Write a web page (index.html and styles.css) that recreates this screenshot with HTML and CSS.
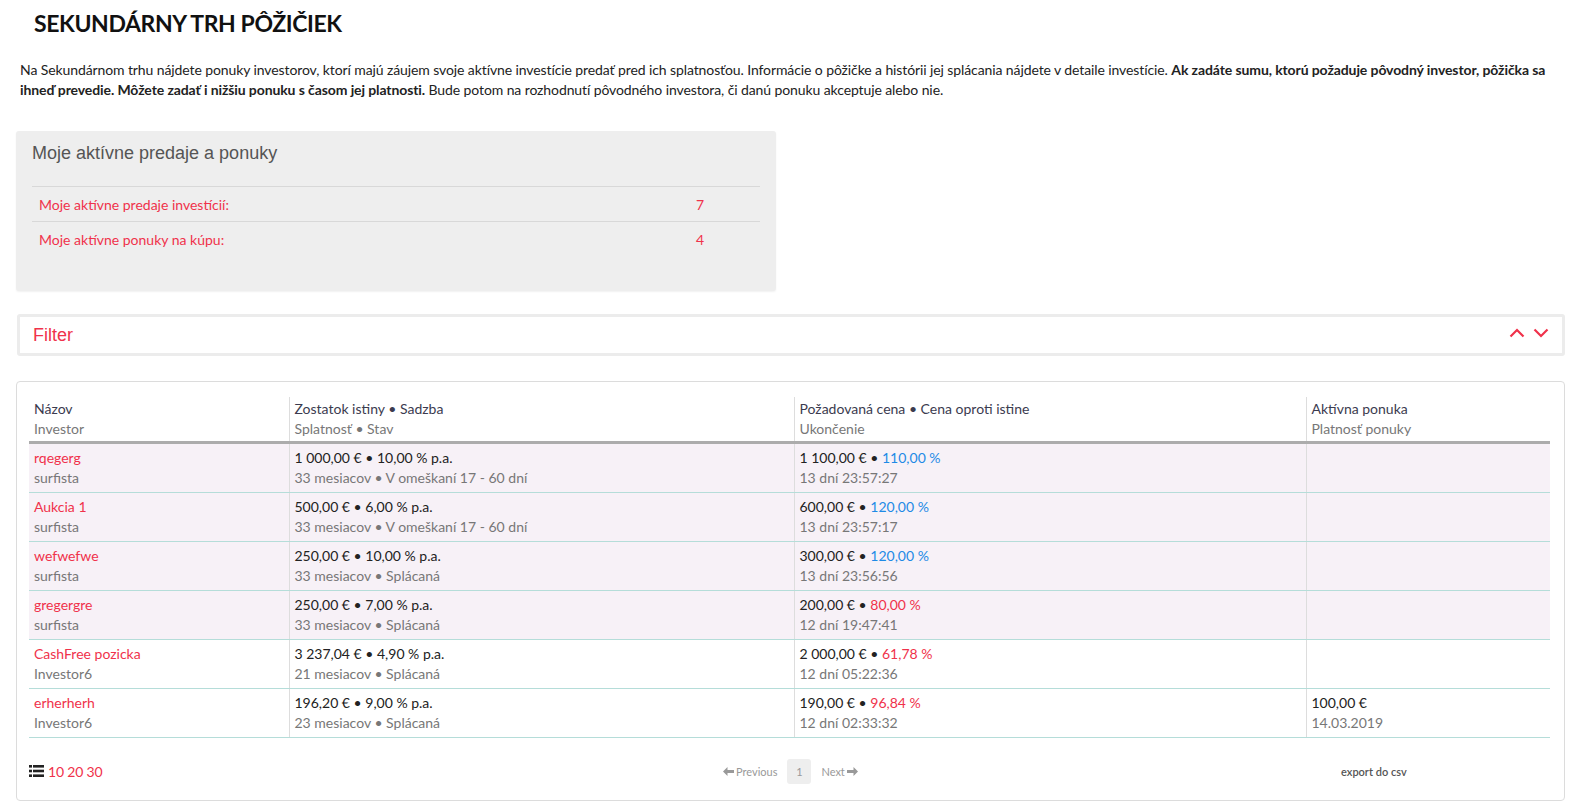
FILE: index.html
```html
<!DOCTYPE html>
<html lang="sk">
<head>
<meta charset="utf-8">
<title>Sekundárny trh pôžičiek</title>
<link rel="stylesheet" href="styles.css">
</head>
<body>
<div class="page">
  <h1 class="title">SEKUNDÁRNY TRH PÔŽIČIEK</h1>
  <p class="intro">Na Sekundárnom trhu nájdete ponuky investorov, ktorí majú záujem svoje aktívne investície predať pred ich splatnosťou. Informácie o pôžičke a histórii jej splácania nájdete v detaile investície. <b>Ak zadáte sumu, ktorú požaduje pôvodný investor, pôžička sa ihneď prevedie. Môžete zadať i nižšiu ponuku s časom jej platnosti.</b> Bude potom na rozhodnutí pôvodného investora, či danú ponuku akceptuje alebo nie.</p>

  <div class="summary">
    <h2 class="summary-title">Moje aktívne predaje a ponuky</h2>
    <table class="summary-table">
      <tr><td class="s-label">Moje aktívne predaje investícií:</td><td class="s-val">7</td></tr>
      <tr><td class="s-label">Moje aktívne ponuky na kúpu:</td><td class="s-val">4</td></tr>
    </table>
  </div>

  <div class="filter">
    <span class="filter-title">Filter</span>
    <span class="chevrons">
      <svg width="16" height="10" viewBox="0 0 16 10"><path d="M1.5 8.5 L8 2 L14.5 8.5" fill="none" stroke="#f0324b" stroke-width="2.2"/></svg>
      <svg width="16" height="10" viewBox="0 0 16 10"><path d="M1.5 1.5 L8 8 L14.5 1.5" fill="none" stroke="#f0324b" stroke-width="2.2"/></svg>
    </span>
  </div>

  <div class="card">
    <table class="grid">
      <colgroup><col class="c1"><col class="c2"><col class="c3"><col class="c4"></colgroup>
      <thead>
        <tr>
          <th><div class="h1">Názov</div><div class="h2">Investor</div></th>
          <th><div class="h1">Zostatok istiny • Sadzba</div><div class="h2">Splatnosť • Stav</div></th>
          <th><div class="h1">Požadovaná cena • Cena oproti istine</div><div class="h2">Ukončenie</div></th>
          <th><div class="h1">Aktívna ponuka</div><div class="h2">Platnosť ponuky</div></th>
        </tr>
      </thead>
      <tbody>
        <tr class="hl">
          <td><div class="l1 red">rqegerg</div><div class="l2">surfista</div></td>
          <td><div class="l1">1 000,00 € • 10,00 % p.a.</div><div class="l2">33 mesiacov • V omeškaní 17 - 60 dní</div></td>
          <td><div class="l1">1 100,00 € • <span class="blue">110,00 %</span></div><div class="l2">13 dní 23:57:27</div></td>
          <td></td>
        </tr>
        <tr class="hl">
          <td><div class="l1 red">Aukcia 1</div><div class="l2">surfista</div></td>
          <td><div class="l1">500,00 € • 6,00 % p.a.</div><div class="l2">33 mesiacov • V omeškaní 17 - 60 dní</div></td>
          <td><div class="l1">600,00 € • <span class="blue">120,00 %</span></div><div class="l2">13 dní 23:57:17</div></td>
          <td></td>
        </tr>
        <tr class="hl">
          <td><div class="l1 red">wefwefwe</div><div class="l2">surfista</div></td>
          <td><div class="l1">250,00 € • 10,00 % p.a.</div><div class="l2">33 mesiacov • Splácaná</div></td>
          <td><div class="l1">300,00 € • <span class="blue">120,00 %</span></div><div class="l2">13 dní 23:56:56</div></td>
          <td></td>
        </tr>
        <tr class="hl">
          <td><div class="l1 red">gregergre</div><div class="l2">surfista</div></td>
          <td><div class="l1">250,00 € • 7,00 % p.a.</div><div class="l2">33 mesiacov • Splácaná</div></td>
          <td><div class="l1">200,00 € • <span class="red">80,00 %</span></div><div class="l2">12 dní 19:47:41</div></td>
          <td></td>
        </tr>
        <tr>
          <td><div class="l1 red">CashFree pozicka</div><div class="l2">Investor6</div></td>
          <td><div class="l1">3 237,04 € • 4,90 % p.a.</div><div class="l2">21 mesiacov • Splácaná</div></td>
          <td><div class="l1">2 000,00 € • <span class="red">61,78 %</span></div><div class="l2">12 dní 05:22:36</div></td>
          <td></td>
        </tr>
        <tr>
          <td><div class="l1 red">erherherh</div><div class="l2">Investor6</div></td>
          <td><div class="l1">196,20 € • 9,00 % p.a.</div><div class="l2">23 mesiacov • Splácaná</div></td>
          <td><div class="l1">190,00 € • <span class="red">96,84 %</span></div><div class="l2">12 dní 02:33:32</div></td>
          <td><div class="l1">100,00 €</div><div class="l2">14.03.2019</div></td>
        </tr>
      </tbody>
    </table>

    <div class="footer">
      <div class="sizes">
        <svg class="list-ico" width="15" height="12" viewBox="0 0 15 12"><rect x="0" y="0" width="3" height="2.6" fill="#222"/><rect x="0" y="4.7" width="3" height="2.6" fill="#222"/><rect x="0" y="9.4" width="3" height="2.6" fill="#222"/><rect x="4" y="0" width="11" height="2.6" fill="#222"/><rect x="4" y="4.7" width="11" height="2.6" fill="#222"/><rect x="4" y="9.4" width="11" height="2.6" fill="#222"/></svg>
        <span class="red">10</span> <span class="red">20</span> <span class="red">30</span>
      </div>
      <div class="pager">
        <span class="pg-link"><svg width="11" height="9" viewBox="0 0 11 9"><path d="M0 4.5 L4.5 0 L4.5 3 L11 3 L11 6 L4.5 6 L4.5 9 Z" fill="#999"/></svg>Previous</span>
        <span class="pg-num">1</span>
        <span class="pg-link">Next<svg width="11" height="9" viewBox="0 0 11 9"><path d="M11 4.5 L6.5 0 L6.5 3 L0 3 L0 6 L6.5 6 L6.5 9 Z" fill="#999"/></svg></span>
      </div>
      <div class="export">export do csv</div>
    </div>
  </div>
</div>
</body>
</html>
```
FILE: styles.css
```css
* { box-sizing: border-box; }
html, body { margin: 0; padding: 0; background: #fff; }
body {
  font-family: "Source Sans Pro", Lato, "Liberation Sans", sans-serif;
  font-size: 14px;
  color: #222;
}
.page { padding: 0 16px 0 16px; }
.title {
  margin: 0;
  padding: 9px 0 0 18px;
  font-size: 23px;
  letter-spacing: -0.4px;
  font-weight: 700;
  line-height: 28px;
  color: #111;
}
.intro {
  margin: 23px 0 0 4px;
  line-height: 20px;
  font-size: 14px;
  letter-spacing: -0.1px;
  color: #222;
}
.intro b { font-weight: 700; }
.summary {
  width: 760px;
  margin-top: 31px;
  background: #eee;
  border-radius: 3px;
  padding: 10px 16px 34px 16px;
  box-shadow: 0 1px 2px rgba(0,0,0,0.06);
}
.summary-title {
  margin: 0;
  font-family: "Liberation Sans", Arial, sans-serif;
  font-weight: 300;
  font-size: 18px;
  line-height: 24px;
  color: #555;
  padding-bottom: 21px;
}
.summary-table {
  width: 728px;
  border-collapse: collapse;
}
.summary-table td {
  border-top: 1px solid #d8d8d8;
  height: 35px;
  padding: 0 7px;
  color: #f0324b;
  font-size: 14px;
}
.summary-table .s-label { width: 657px; }
.filter {
  margin-top: 23px;
  height: 42px;
  border: 3px solid #ececec;
  border-radius: 3px;
  display: flex;
  align-items: center;
  justify-content: space-between;
  padding: 0 13px 0 13px;
  margin-left: 1px;
  margin-right: 4px;
}
.filter-title {
  font-family: "Liberation Sans", Arial, sans-serif;
  font-size: 18px;
  color: #f0324b;
  padding-top: 2px;
}
.chevrons { display: flex; gap: 8px; align-items: center; margin-top: -3px; }
.card {
  margin-top: 25px;
  margin-right: 4px;
  border: 1px solid #dcdcdc;
  border-radius: 4px;
  padding: 15px 13px 0 12px;
  height: 420px;
}
.grid {
  width: 1521px;
  border-collapse: collapse;
}
.grid .c1 { width: 260px; }
.grid .c2 { width: 505px; }
.grid .c3 { width: 512px; }
.grid .c4 { width: 244px; }
.grid th {
  text-align: left;
  font-weight: 400;
  padding: 2px 5px 2px 5px;
  border-left: 1px solid #ddd;
  border-bottom: 3px solid #acacac;
  vertical-align: top;
}
.grid th:first-child, .grid td:first-child { border-left: none; }
.h1 { color: #3b3b4f; line-height: 20px; }
.h2 { color: #777; line-height: 20px; }
.grid td {
  padding: 4px 5px 4px 5px;
  border-left: 1px solid #ddd;
  border-bottom: 1px solid #b5ddd9;
  vertical-align: top;
  height: 49px;
}
.grid tr.hl td { background: #f7f1f7; }
.l1 { line-height: 20px; color: #222; }
.l2 { line-height: 20px; color: #777; }
.red { color: #f0324b; }
.l1.red { color: #f0324b; }
.blue { color: #1e8ae6; }
.footer {
  display: flex;
  align-items: center;
  height: 67px;
  padding-top: 0;
}
.sizes { width: 684px; display: flex; align-items: center; gap: 3px; font-size: 14px; }
.list-ico { margin-right: 1px; }
.pager { display: flex; align-items: center; gap: 0; font-size: 11px; color: #999; width: 628px; }
.pg-link { display: flex; align-items: center; gap: 2px; padding: 0 10px; }
.pg-num {
  background: #eee;
  border-radius: 3px;
  width: 24px;
  height: 25px;
  display: flex;
  align-items: center;
  justify-content: center;
}
.export { font-size: 11px; color: #555; font-weight: 600; }
```
